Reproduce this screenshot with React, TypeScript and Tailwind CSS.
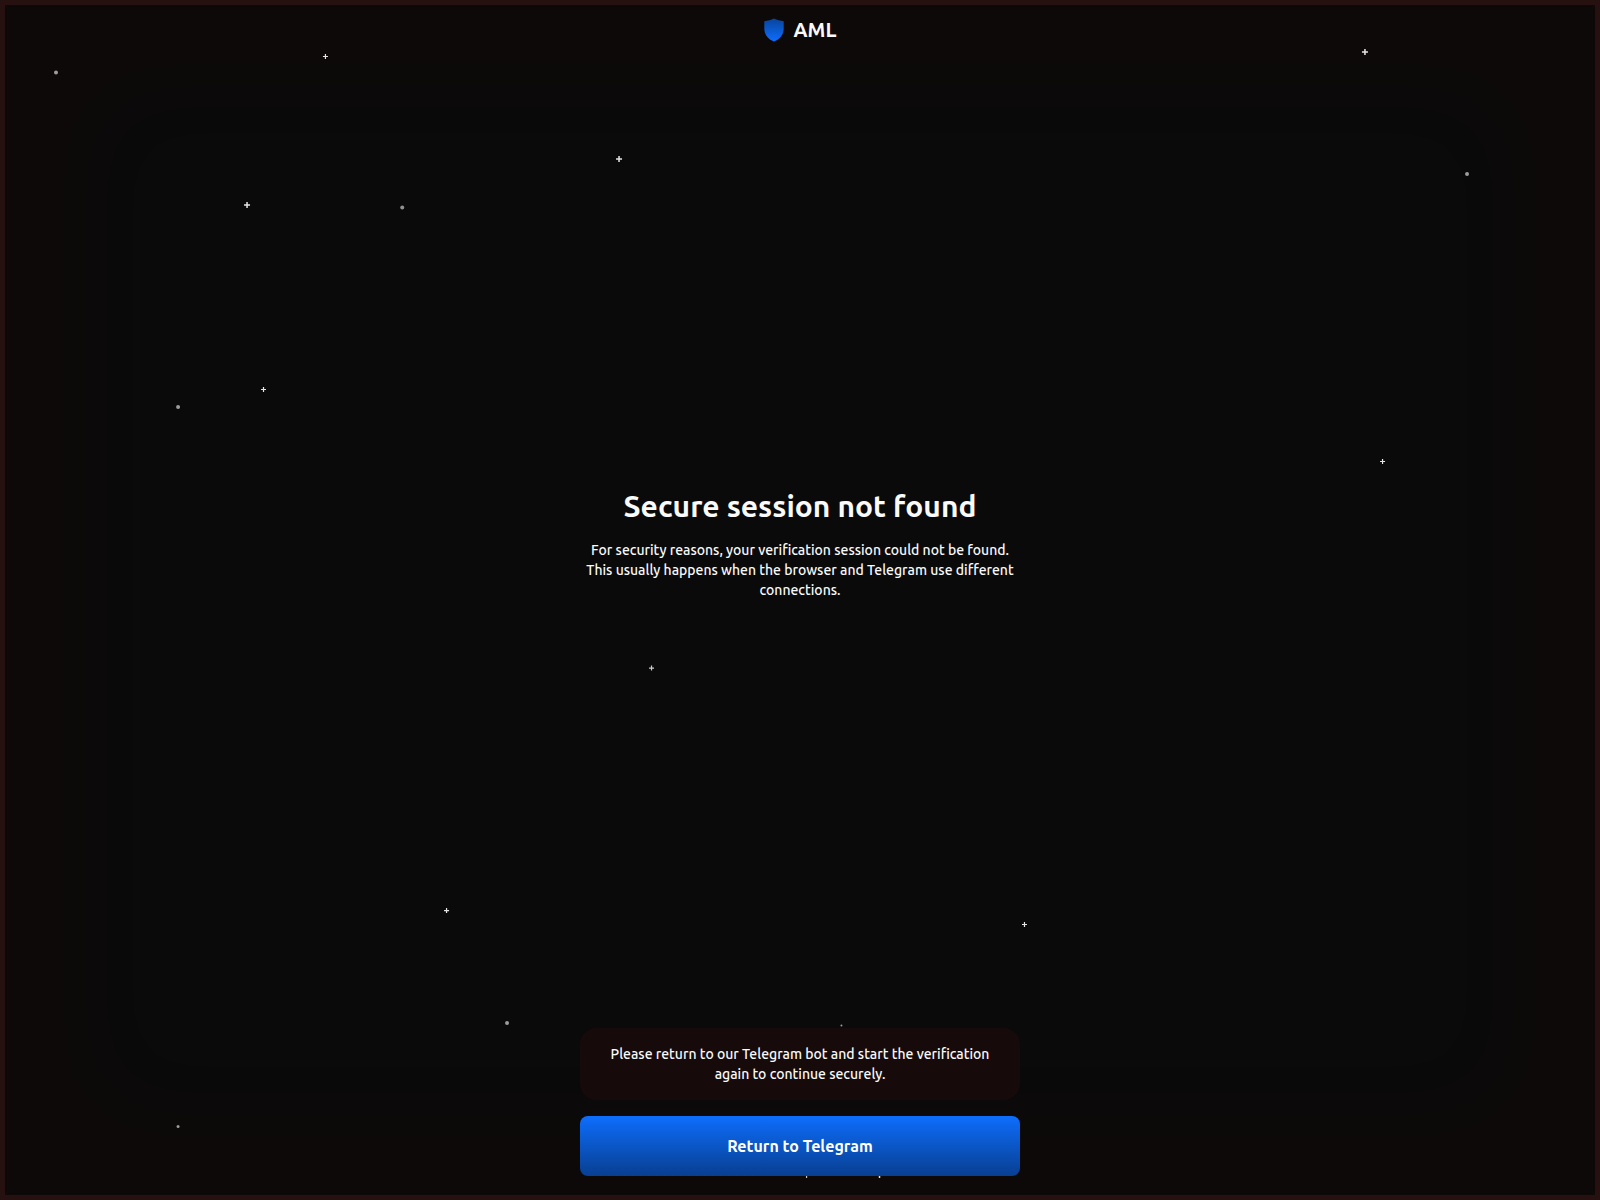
type StarKind = "dot" | "plus";

interface Star {
  kind: StarKind;
  x: number;
  y: number;
  size: number;
  opacity: number;
}

// x and y are percentages of the viewport
const STARS: Star[] = [
  { kind: "dot", x: 3.5, y: 6.04, size: 4, opacity: 0.6 },
  { kind: "dot", x: 25.14, y: 17.29, size: 4, opacity: 0.55 },
  { kind: "dot", x: 91.69, y: 14.5, size: 4, opacity: 0.6 },
  { kind: "dot", x: 11.13, y: 33.92, size: 4, opacity: 0.6 },
  { kind: "dot", x: 31.69, y: 85.25, size: 4, opacity: 0.6 },
  { kind: "dot", x: 11.13, y: 93.88, size: 3, opacity: 0.6 },
  { kind: "dot", x: 52.59, y: 85.46, size: 2, opacity: 0.6 },
  { kind: "plus", x: 20.34, y: 4.71, size: 5, opacity: 0.9 },
  { kind: "plus", x: 85.31, y: 4.33, size: 6, opacity: 0.9 },
  { kind: "plus", x: 38.69, y: 13.25, size: 6, opacity: 0.9 },
  { kind: "plus", x: 15.44, y: 17.08, size: 6, opacity: 0.9 },
  { kind: "plus", x: 16.47, y: 32.46, size: 5, opacity: 0.9 },
  { kind: "plus", x: 86.41, y: 38.46, size: 5, opacity: 0.9 },
  { kind: "plus", x: 40.72, y: 55.67, size: 5, opacity: 0.8 },
  { kind: "plus", x: 27.91, y: 75.88, size: 5, opacity: 0.9 },
  { kind: "plus", x: 64.03, y: 77.04, size: 5, opacity: 0.9 },
  { kind: "plus", x: 50.41, y: 97.96, size: 5, opacity: 0.8 },
  { kind: "plus", x: 54.97, y: 97.92, size: 6, opacity: 0.9 },
];

function StarField() {
  return (
    <svg className="absolute inset-0 size-full" aria-hidden="true">
      {STARS.map((s) =>
        s.kind === "dot" ? (
          <circle
            key={`${s.x}-${s.y}`}
            cx={`${s.x}%`}
            cy={`${s.y}%`}
            r={s.size / 2}
            fill="#fff"
            opacity={s.opacity}
          />
        ) : (
          <svg
            key={`${s.x}-${s.y}`}
            x={`${s.x}%`}
            y={`${s.y}%`}
            overflow="visible"
          >
            <path
              d={`M${-s.size / 2} 0H${s.size / 2}M0 ${-s.size / 2}V${s.size / 2}`}
              stroke="#fff"
              strokeWidth={s.size > 5 ? 1.5 : 1.2}
              opacity={s.opacity}
            />
          </svg>
        )
      )}
    </svg>
  );
}

function ShieldLogo() {
  return (
    <svg width="20" height="24" viewBox="0 0 20 24" aria-hidden="true">
      <defs>
        <linearGradient id="shield" x1="0" y1="0" x2="0" y2="1">
          <stop offset="0" stopColor="#08449c" />
          <stop offset="1" stopColor="#0d6efd" />
        </linearGradient>
      </defs>
      <path
        d="M10 0.5C7 2 3.6 2.9 0.3 3.2V10.5C0.3 16.5 4.2 21.3 10 23.5C15.8 21.3 19.7 16.5 19.7 10.5V3.2C16.4 2.9 13 2 10 0.5Z"
        fill="url(#shield)"
      />
    </svg>
  );
}

export default function App() {
  return (
    <div className="relative flex min-h-screen flex-col items-center bg-[#0a0a0a] px-6 pb-6 font-['Ubuntu','Ubuntu_Sans','Noto_Sans',sans-serif] text-neutral-50">
      <div className="pointer-events-none absolute inset-0 shadow-[inset_0_0_0_5px_rgba(255,75,75,0.1),inset_0_0_100px_85px_rgba(255,59,10,0.023)]" />
      <StarField />

      <header className="relative flex h-[60px] items-center gap-2.5">
        <ShieldLogo />
        <span className="text-xl font-semibold">AML</span>
      </header>

      <main className="relative flex w-full max-w-[440px] flex-1 flex-col justify-center text-center">
        <h1 className="text-3xl font-semibold">Secure session not found</h1>
        <p className="mt-4 text-sm font-medium">
          For security reasons, your verification session could not be found.
          This usually happens when the browser and Telegram use different
          connections.
        </p>
      </main>

      <footer className="relative flex w-full max-w-[440px] flex-col gap-4">
        <p className="rounded-2xl bg-[#160a0b] px-6 py-4 text-center text-sm font-medium">
          Please return to our Telegram bot and start the verification again to
          continue securely.
        </p>
        <button
          type="button"
          className="h-[60px] rounded-lg bg-linear-to-b from-[#0d6efd] to-[#083f92] text-base font-semibold text-white"
        >
          Return to Telegram
        </button>
      </footer>
    </div>
  );
}
